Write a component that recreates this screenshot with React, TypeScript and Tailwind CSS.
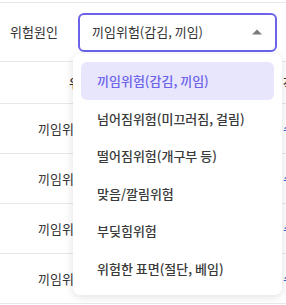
import React from 'react';

const options = [
  '끼임위험(감김, 끼임)',
  '넘어짐위험(미끄러짐, 걸림)',
  '떨어짐위험(개구부 등)',
  '맞음/깔림위험',
  '부딪힘위험',
  '위험한 표면(절단, 베임)',
];

const rows = ['끼임위험(감김, 끼임)', '끼임위험(감김, 끼임)', '끼임위험(감김, 끼임)', '끼임위험(감김, 끼임)'];

export default function App() {
  const selected = options[0];

  return (
    <div className="relative w-[286px] h-[305px] overflow-hidden bg-white text-[13px] text-[#333] font-['Noto_Sans_CJK_KR','Noto_Sans',sans-serif]">
      <div className="h-[2px]" />
      <div className="border-t border-[#e8e8e8]" />

      {/* filter row */}
      <div className="flex items-center h-[58px] pl-[10px]">
        <span className="w-[52px] whitespace-nowrap">위험원인</span>
        <div className="ml-[16px] w-[199px] h-[39px] border-2 border-[#6c63e8] rounded-[6px] flex items-center justify-between pl-[12px] pr-[12px]">
          <span className="whitespace-nowrap">{selected}</span>
          <svg width="10" height="6" viewBox="0 0 10 6" className="mr-[1px]">
            <path d="M0 5.5 L5 0.5 L10 5.5 Z" fill="#7a7a7a" />
          </svg>
        </div>
      </div>

      {/* table */}
      <div className="border-t border-[#e8e8e8]">
        <div className="flex items-center h-[42px] border-b border-[#e8e8e8]">
          <div className="w-[283px] shrink-0 pl-[69px] font-medium whitespace-nowrap">위험원인</div>
          <div className="shrink-0 font-medium whitespace-nowrap">작업</div>
        </div>
        {rows.map((r, i) => (
          <div key={i} className="flex items-center h-[50px] border-b border-[#e8e8e8]">
            <div className="w-[283px] shrink-0 pl-[38px] whitespace-nowrap">{r}</div>
            <div className="shrink-0 text-[#2f6fd6] whitespace-nowrap">수정</div>
          </div>
        ))}
      </div>

      {/* dropdown menu */}
      <div className="absolute left-[73px] top-[54px] w-[209px] h-[241px] bg-white rounded-[7px] shadow-[0_2px_10px_rgba(0,0,0,0.12)] p-[8px]">
        {options.map((o) => {
          const active = o === selected;
          return (
            <div
              key={o}
              className={
                active
                  ? 'h-[37.5px] flex items-center pl-[16px] rounded-[6px] bg-[#e8e6fd] text-[#6c63e8] font-medium whitespace-nowrap'
                  : 'h-[37.5px] flex items-center pl-[16px] rounded-[6px] text-[#3a3a3a] font-medium whitespace-nowrap'
              }
            >
              {o}
            </div>
          );
        })}
      </div>
    </div>
  );
}
